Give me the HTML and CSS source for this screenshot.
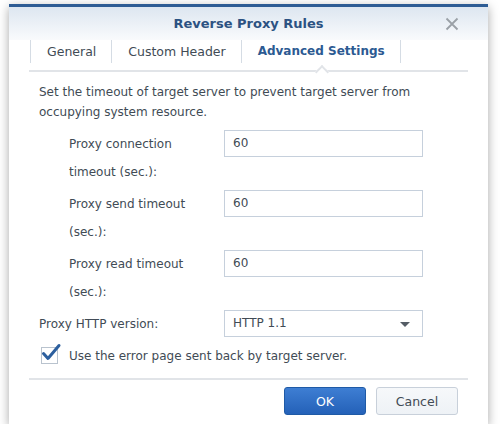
FILE: index.html
```html
<!DOCTYPE html>
<html>
<head>
<meta charset="utf-8">
<link rel="stylesheet" href="styles.css">
</head>
<body>
<div class="window">
  <div class="titlebar">
    <span class="title">Reverse Proxy Rules</span>
    <span class="close" aria-label="close">
      <svg width="14" height="14" viewBox="0 0 14 14"><path d="M1.5 1.5 L12.5 12.5 M12.5 1.5 L1.5 12.5" stroke="#9aa0a7" stroke-width="1.8" fill="none"/></svg>
    </span>
  </div>
  <div class="tabs">
    <div class="tab">General</div>
    <div class="tab">Custom Header</div>
    <div class="tab active">Advanced Settings</div>
    <div class="tab-end"></div>
  </div>
  <div class="content">
    <p class="desc">Set the timeout of target server to prevent target server from occupying system resource.</p>
    <div class="row">
      <div class="label">Proxy connection timeout (sec.):</div>
      <div class="field">60</div>
    </div>
    <div class="row">
      <div class="label">Proxy send timeout (sec.):</div>
      <div class="field">60</div>
    </div>
    <div class="row">
      <div class="label">Proxy read timeout (sec.):</div>
      <div class="field">60</div>
    </div>
    <div class="row row-wide">
      <div class="label">Proxy HTTP version:</div>
      <div class="field select">HTTP 1.1<span class="caret"></span></div>
    </div>
    <div class="check-row">
      <span class="checkbox">
        <svg width="22" height="20" viewBox="0 0 22 20"><path d="M3.5 10.5 L8 15.5 L19 2.5" stroke="#2c5f9e" stroke-width="3" fill="none" stroke-linecap="round" stroke-linejoin="round"/></svg>
      </span>
      <span class="check-text">Use the error page sent back by target server.</span>
    </div>
  </div>
  <div class="footer">
    <button class="btn btn-primary">OK</button>
    <button class="btn">Cancel</button>
  </div>
</div>
</body>
</html>
```
FILE: styles.css
```css
html, body {
  margin: 0;
  padding: 0;
  background: #ffffff;
}
body {
  font-family: "DejaVu Sans", Verdana, sans-serif;
  font-size: 12px;
  color: #414b55;
}
.window {
  margin: 4px 0 0 9px;
  width: 479px;
  height: 420px;
  box-sizing: border-box;
  border-top: 3px solid #2e5c94;
  background: #ffffff;
  box-shadow: 0 3px 10px rgba(0, 0, 0, 0.35);
  display: flex;
  flex-direction: column;
}
.titlebar {
  position: relative;
  height: 33px;
  display: flex;
  align-items: center;
  justify-content: center;
  background: linear-gradient(#dde6f0, #ffffff 40px);
}
.title {
  font-weight: bold;
  font-size: 13px;
  color: #2c5282;
}
.close {
  position: absolute;
  right: 29px;
  top: 10px;
  width: 14px;
  height: 14px;
  display: block;
}
.close svg { display: block; }
.tabs {
  margin: 0 20px;
  display: flex;
  padding-bottom: 7px;
  border-bottom: 2px solid #e1e4e8;
  position: relative;
}
.tab {
  height: 23px;
  line-height: 23px;
  padding: 0 15px 0 16px;
  border-left: 1px solid #d5dce4;
  font-size: 12.5px;
  color: #414b55;
  position: relative;
}
.tab:first-child { margin-left: 1px; }
.tab.active {
  font-weight: bold;
  font-size: 12px;
  color: #2c5a92;
}
.tab.active::after {
  content: "";
  position: absolute;
  left: 50%;
  bottom: -14px;
  width: 8px;
  height: 8px;
  margin-left: -4px;
  background: #ffffff;
  border-top: 2px solid #e1e4e8;
  border-left: 2px solid #e1e4e8;
  transform: rotate(45deg);
}
.tab-end {
  height: 23px;
  border-left: 1px solid #d5dce4;
}
.content {
  padding: 10px 30px 0 30px;
  flex: 1;
}
.desc {
  margin: 0 0 8px 0;
  line-height: 20px;
}
.row {
  display: flex;
  align-items: flex-start;
  margin-bottom: 4px;
  padding-left: 30px;
}
.label {
  width: 140px;
  margin-right: 15px;
  line-height: 28px;
}
.field {
  width: 199px;
  height: 27px;
  box-sizing: border-box;
  border: 1px solid #c6d0dc;
  padding: 0 8px;
  line-height: 25px;
  position: relative;
}
.row-wide {
  padding-left: 0;
  margin-bottom: 0;
}
.row-wide .label {
  width: 170px;
}
.caret {
  position: absolute;
  right: 12px;
  top: 11px;
  width: 0;
  height: 0;
  border-left: 5px solid transparent;
  border-right: 5px solid transparent;
  border-top: 5px solid #555d66;
}
.check-row {
  display: flex;
  align-items: center;
  margin-top: 7px;
  height: 21px;
}
.checkbox {
  position: relative;
  width: 15px;
  height: 15px;
  border: 1px solid #b9c3ce;
  background: #ffffff;
  margin-left: 2px;
  margin-right: 11px;
}
.checkbox svg {
  position: absolute;
  left: -2px;
  top: -5px;
}
.footer {
  margin: 0 20px;
  border-top: 2px solid #e1e4e8;
  padding: 7px 10px 9px 0;
  display: flex;
  justify-content: flex-end;
  gap: 10px;
}
.btn {
  width: 82px;
  height: 28px;
  box-sizing: border-box;
  font-family: "DejaVu Sans", Verdana, sans-serif;
  font-size: 12.5px;
  color: #414b55;
  border: 1px solid #c8d0da;
  border-radius: 3px;
  background: linear-gradient(#f6f8fa, #eef2f6);
  padding: 0;
}
.btn-primary {
  color: #ffffff;
  border-color: #1f5aa6;
  background: linear-gradient(#3e7ed3, #2461b8);
}
```
